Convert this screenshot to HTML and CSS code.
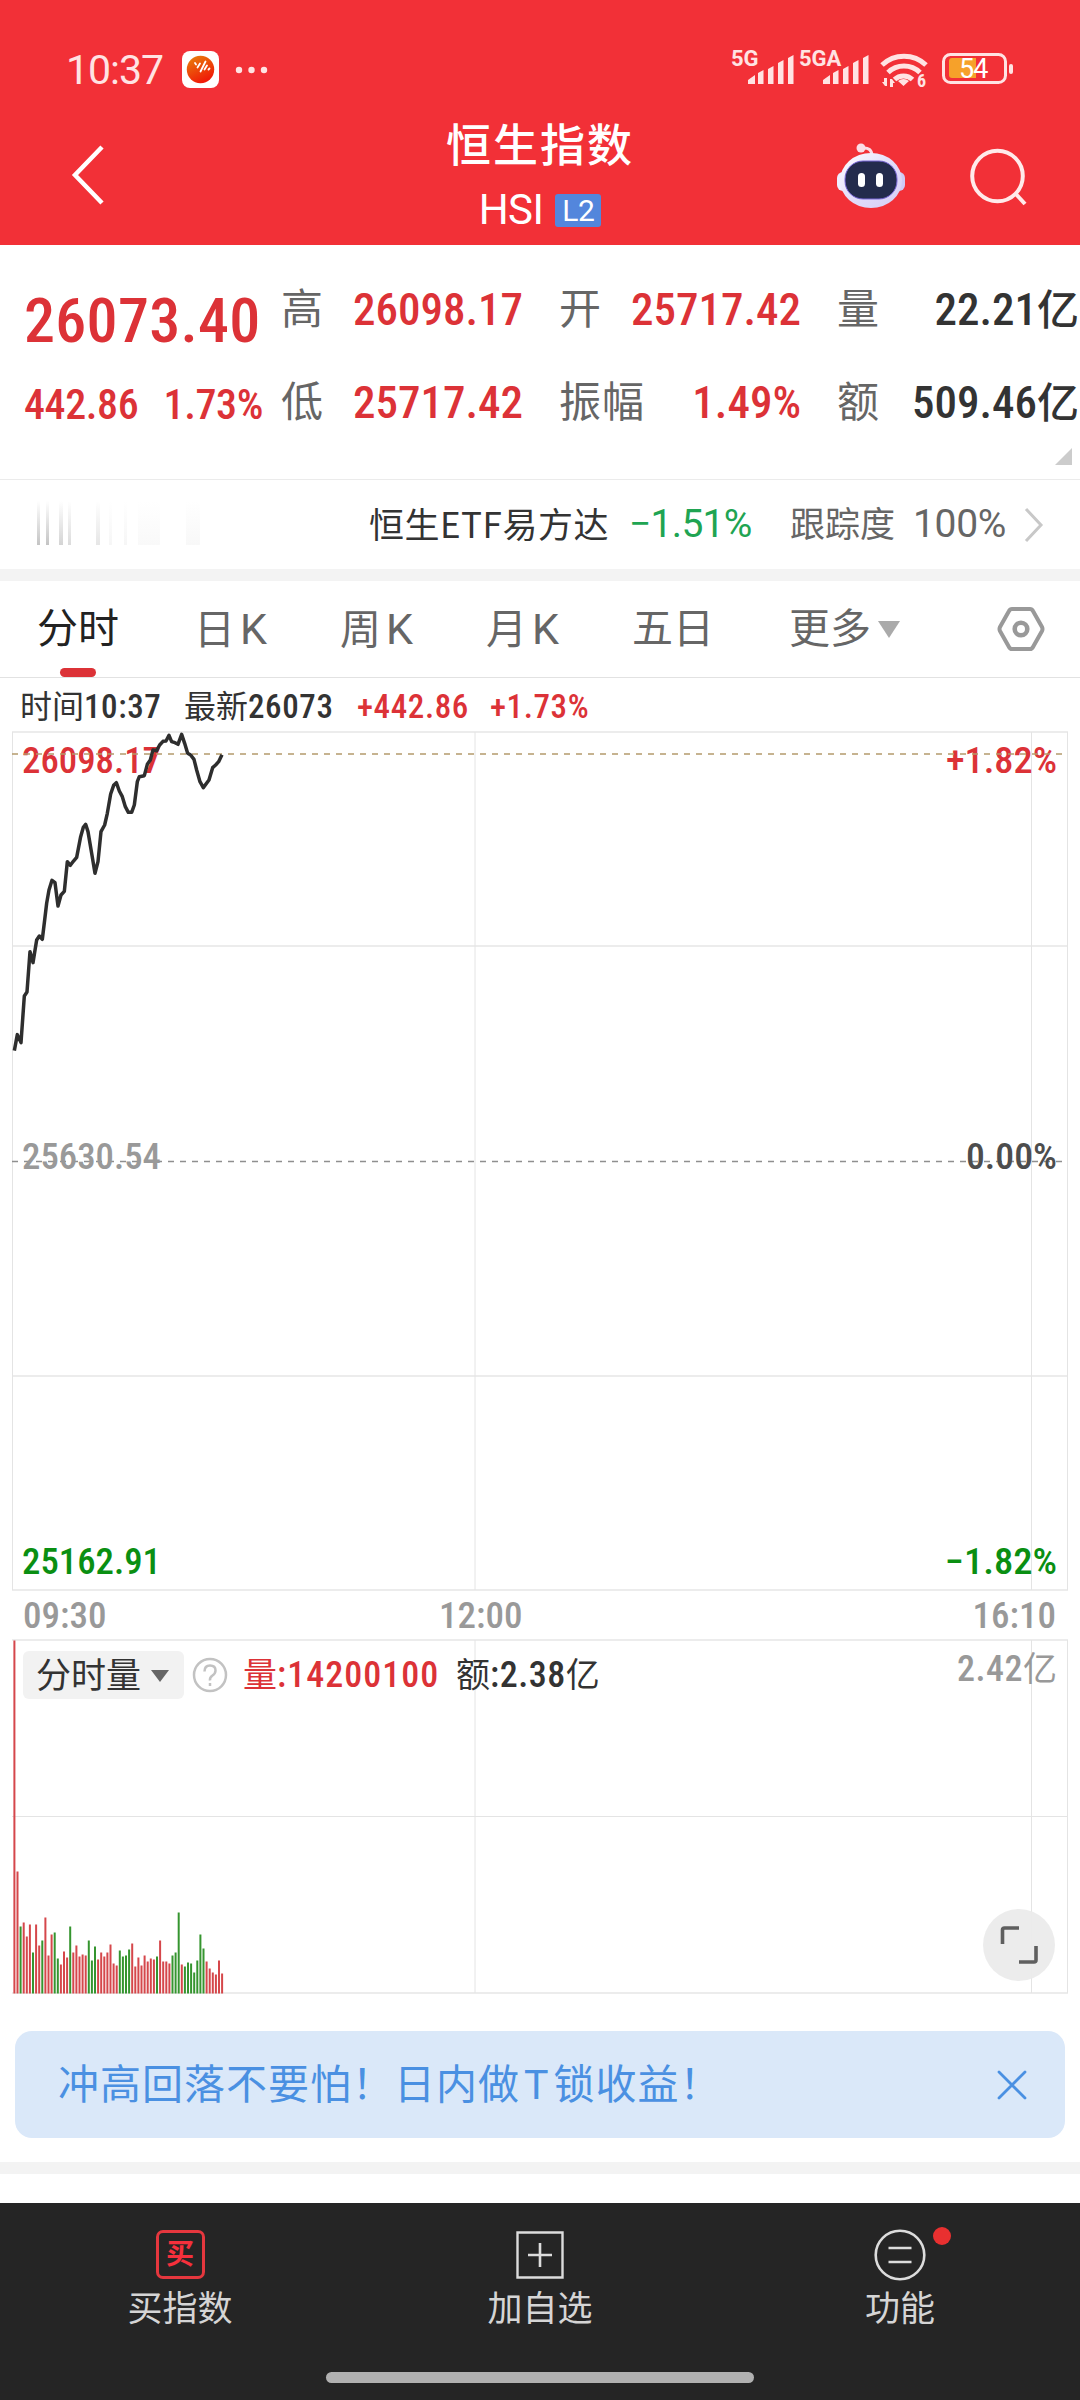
FILE: index.html
```html
<!DOCTYPE html>
<html lang="zh-CN">
<head>
    <meta charset="UTF-8">
    <meta name="viewport" content="width=device-width, initial-scale=1.0">
    <title>恒生指数 HSI</title>
    <link rel="stylesheet" href="styles.css">
</head>
<body>
    <header class="header">
        <div class="status-bar">
            <span class="clock">10:37</span>
            <svg class="app-icon" width="38" height="38" viewBox="0 0 38 38">
                <defs>
                    <linearGradient id="appFill" x1="0" y1="0" x2="0.5" y2="1">
                        <stop offset="0" stop-color="#e8850c"/>
                        <stop offset="1" stop-color="#f01a08"/>
                    </linearGradient>
                </defs>
                <rect width="37" height="37" rx="8" fill="#fff"/>
                <circle cx="18.5" cy="18.500" r="13.700" fill="url(#appFill)"/>
                <path d="M13 12l1 1.500M15.500 16.500l2.500-4M18.500 20.500l5-10M22.500 18.500l2.500-4M26.500 18.500l1-1" stroke="#fff" stroke-width="1.800" stroke-linecap="round"/>
            </svg>
            <svg class="dots" width="34" height="8" viewBox="0 0 34 8" fill="#ffe3e3">
                <circle cx="4" cy="4" r="3.200"/><circle cx="16.500" cy="4" r="3.200"/><circle cx="29" cy="4" r="3.200"/>
            </svg>
            <svg class="signals" width="284" height="56" viewBox="730 42 284 56" fill="#ffe3e3">
                <text class="net" x="731" y="66">5G</text>
                <path d="M748 84v-4l7-5v9zM758 84V73l5.500-3v14zM768 84V69l5.500-3v18zM778 84V63l5.500-3v24zM788 84V58l5.500-3v29z"/>
                <text class="net" x="799" y="66">5GA</text>
                <path d="M823 84v-4l7-5v9zM833 84V73l5.500-3v14zM843 84V69l5.500-3v18zM853 84V63l5.500-3v24zM863 84V58l5.500-3v29z"/>
                <g fill="none" stroke="#ffe3e3" stroke-width="5">
                    <path d="M882 65a32 32 0 0 1 44 0M888 72.500a23 23 0 0 1 32 0M894.500 79.500a13 13 0 0 1 18 0"/>
                </g>
                <path d="M898 81q5.500-4 11 0l-5.500 5zM887 78v8h-2l-3-4h2v-4zM890 87v-8h2l3 4h-2v4z"/>
                <text class="wifi-gen" x="917" y="87">6</text>
                <rect x="943.500" y="54.500" width="62" height="28" rx="7" fill="none" stroke="#ffe3e3" stroke-width="3"/>
                <path d="M949 61q0-3 3-3h24v20h-24q-3 0-3-3z" fill="#f6a12a"/>
                <rect x="1009" y="64" width="4" height="10" rx="2"/>
                <text class="battery" x="959" y="78">54</text>
            </svg>
        </div>
        <div class="title-bar">
            <svg class="back" width="40" height="62" viewBox="0 0 40 62">
                <path d="M34 3L7 31l27 28" fill="none" stroke="#fff" stroke-width="4.500"/>
            </svg>
            <div class="title">
                <h1>恒生指数</h1>
                <div class="code">HSI<span class="badge">L2</span></div>
            </div>
            <div class="actions">
                <svg class="robot" width="70" height="68" viewBox="0 0 70 68">
                    <defs>
                        <linearGradient id="shell" x1="0" y1="0" x2="1" y2="1">
                            <stop offset="0" stop-color="#fff"/>
                            <stop offset="0.500" stop-color="#e2ddfa"/>
                            <stop offset="1" stop-color="#d5cdf5"/>
                        </linearGradient>
                    </defs>
                    <path d="M26 7q10-1 10 8" fill="none" stroke="#fbdde6" stroke-width="3"/>
                    <circle cx="25" cy="7" r="4.500" fill="#fbdde6"/>
                    <rect x="1" y="31" width="12" height="19" rx="6" fill="#efedff"/>
                    <rect x="57" y="31" width="12" height="19" rx="6" fill="#cfcaf6"/>
                    <ellipse cx="35" cy="39.500" rx="31" ry="27.500" fill="url(#shell)"/>
                    <rect x="9" y="20" width="52" height="38" rx="18" fill="#232b4c" stroke="#7a68d8" stroke-width="1"/>
                    <rect x="22" y="32" width="7" height="14" rx="3.500" fill="#fff"/>
                    <rect x="40" y="32" width="7" height="14" rx="3.500" fill="#fff"/>
                </svg>
                <svg class="search" width="60" height="60" viewBox="0 0 60 60" fill="none" stroke="#ffeaea" stroke-width="4">
                    <circle cx="28.500" cy="29" r="25.300"/>
                    <path d="M46 46l10 11"/>
                </svg>
            </div>
        </div>
    </header>

    <section class="quote">
        <div class="quote-main">
            <div class="price">26073.40</div>
            <div class="change"><span>442.86</span><span>1.73%</span></div>
        </div>
        <dl class="quote-grid">
            <div><dt>高</dt><dd class="up">26098.17</dd></div>
            <div><dt>开</dt><dd class="up">25717.42</dd></div>
            <div><dt>量</dt><dd>22.21<i>亿</i></dd></div>
            <div><dt>低</dt><dd class="up">25717.42</dd></div>
            <div><dt>振幅</dt><dd class="up">1.49%</dd></div>
            <div><dt>额</dt><dd>509.46<i>亿</i></dd></div>
        </dl>
        <span class="corner"></span>
    </section>

    <section class="etf">
        <span class="ticker-fade"></span>
        <span class="etf-name">恒生ETF易方达</span>
        <span class="etf-change">−1.51%</span>
        <span class="etf-label">跟踪度</span>
        <span class="etf-track">100%</span>
        <svg width="20" height="36" viewBox="0 0 20 36"><path d="M2 2l15 16L2 34" fill="none" stroke="#c8c8c8" stroke-width="3"/></svg>
    </section>

    <nav class="tabs">
        <span class="tab active">分时</span>
        <span class="tab">日<b>K</b></span>
        <span class="tab">周<b>K</b></span>
        <span class="tab">月<b>K</b></span>
        <span class="tab">五日</span>
        <span class="tab more">更多<i class="caret"></i></span>
        <svg class="settings" width="48" height="46" viewBox="0 0 48 46" fill="none" stroke="#999">
            <path d="M15 3h18q2 0 3 2l9 16q1 2 0 4l-9 16q-1 2-3 2H15q-2 0-3-2L3 25q-1-2 0-4l9-16q1-2 3-2z" stroke-width="4"/>
            <circle cx="24" cy="23" r="6.300" stroke-width="4.600"/>
        </svg>
    </nav>

    <div class="info">
        <span class="info-time">时间<b>10:37</b></span>
        <span class="info-last">最新<b>26073</b></span>
        <b class="up info-diff">+442.86</b>
        <b class="up info-rate">+1.73%</b>
    </div>

    <svg class="chart" width="1080" height="860" viewBox="0 731 1080 860">
        <g class="grid">
            <path d="M12 732H1068M12 946H1068M12 1376H1068M12 1590H1068"/>
            <path d="M12.500 732V1590M475 732V1590M1031.500 732V1590M1067.500 732V1590" class="thin"/>
        </g>
        <path d="M12 1161.500H1068" class="dash-close"/>
        <text x="22" y="773" textLength="139" lengthAdjust="spacingAndGlyphs" class="up">26098.17</text>
        <text x="946" y="773" textLength="111" lengthAdjust="spacingAndGlyphs" class="up">+1.82%</text>
        <text x="22" y="1169" textLength="139" lengthAdjust="spacingAndGlyphs" class="flat">25630.54</text>
        <text x="966" y="1169" textLength="91" lengthAdjust="spacingAndGlyphs" class="zero">0.00%</text>
        <text x="22" y="1574" textLength="139" lengthAdjust="spacingAndGlyphs" class="down">25162.91</text>
        <text x="945" y="1574" textLength="112" lengthAdjust="spacingAndGlyphs" class="down">−1.82%</text>
        <path d="M12 754H1068" class="dash-last"/>
        <!-- minute line, plotted in thirds of a pixel -->
        <g transform="translate(0 720) scale(0.3333)">
            <polyline class="price-line" points="43,992 52,944 63,968 73,828 81,816 90,695 99,728 110,660 118,648 127,658 134,600 140,550 147,510 156,481 165,488 174,558 183,525 193,514 202,425 211,436 220,424 230,412 242,350 250,322 257,313 264,335 275,400 285,460 294,425 303,335 314,315 322,280 332,222 341,196 349,188 358,213 367,230 376,260 385,277 395,277 403,255 412,185 418,170 433,167 442,133 451,120 459,90 470,92 479,75 489,64 498,63 507,46 515,65 525,68 534,73 545,43 554,70 563,100 572,105 582,118 590,150 600,185 610,203 627,180 638,143 647,135 656,125 666,104"/>
        </g>
    </svg>

    <div class="time-axis">
        <span>09:30</span>
        <span>12:00</span>
        <span>16:10</span>
    </div>

    <section class="volume">
        <svg class="volume-chart" width="1080" height="356" viewBox="0 1639 1080 356">
            <g class="grid">
                <path d="M12 1640H1068M12 1993H1068"/>
                <path d="M12 1816.500H1068M475 1640V1993M1031.500 1640V1993M1067.500 1640V1993" class="thin"/>
            </g>
            <g id="bars"></g>
        </svg>
        <div class="volume-head">
            <span class="chip">分时量<i class="caret dark"></i></span>
            <svg class="help" width="36" height="38" viewBox="0 0 36 38">
                <circle cx="18" cy="19" r="16" fill="none" stroke="#c2c2c2" stroke-width="2.500"/>
                <path d="M12.500 15.500q0-6 5.500-6t5.500 5q0 3-3 5t-2.500 5M18 27v3" fill="none" stroke="#c2c2c2" stroke-width="2.500"/>
            </svg>
            <span class="vol up">量<b>:14200100</b></span>
            <span class="amt">额<b>:2.38</b>亿</span>
            <span class="vol-max"><b>2.42</b>亿</span>
        </div>
        <svg class="expand" width="72" height="72" viewBox="0 0 72 72">
            <circle cx="36" cy="36" r="36" fill="#ebebeb" fill-opacity="0.950"/>
            <path d="M19.500 35V21q0-2 2-2H36M36 53h15q2 0 2-2V37" fill="none" stroke="#5f5f5f" stroke-width="3.600"/>
        </svg>
    </section>

    <div class="banner">
        <span>冲高回落不要怕！日内做<b>T</b>锁收益！</span>
        <svg width="32" height="32" viewBox="0 0 32 32"><path d="M3 3l26 26M29 3L3 29" stroke="#4a90e2" stroke-width="2.800" stroke-linecap="round"/></svg>
    </div>
    <div class="divider"></div>

    <footer class="bottom-nav">
        <div class="nav-items">
            <div class="nav-item">
                <span class="buy-icon">买</span>
                <span>买指数</span>
            </div>
            <div class="nav-item">
                <svg width="52" height="52" viewBox="0 0 52 52" fill="none" stroke="#dcdcdc">
                    <path d="M3.500 3.500h45v45h-45z" stroke-width="2.400"/>
                    <path d="M26 14v24M14 26h24" stroke-width="2.600"/>
                </svg>
                <span>加自选</span>
            </div>
            <div class="nav-item">
                <svg width="52" height="52" viewBox="0 0 52 52" fill="none" stroke="#dcdcdc" stroke-width="2.600">
                    <circle cx="26" cy="26" r="24.300"/>
                    <path d="M14.500 19h23M14.500 33h23"/>
                </svg>
                <i class="dot"></i>
                <span>功能</span>
            </div>
        </div>
        <div class="home-bar"></div>
    </footer>

    <script>
        // [direction, height] per minute
        const volumes = 'r353 r122 g67 r71 r57 r69 g41 r69 r48 g53 r76 r38 r59 g61 g35 r29 r42 r36 g67 r41 r48 r37 r39 r38 g53 g33 g47 r34 r41 r37 r41 r49 r30 r28 g43 g37 g38 g44 r50 r27 r36 r28 r38 r32 r35 r34 g37 r53 r32 r32 r30 g38 g41 g81 r29 g27 g31 g30 g21 g33 g59 g45 r32 r25 r21 r19 r33 r20'.split(' ');
        const bars = document.getElementById('bars');

        volumes.forEach((item, i) => {
            const height = Number(item.slice(1));
            const rect = document.createElementNS('http://www.w3.org/2000/svg', 'rect');
            rect.setAttribute('x', 13.4 + i * 3.1);
            rect.setAttribute('y', 1993.5 - height);
            rect.setAttribute('width', 2);
            rect.setAttribute('height', height);
            rect.setAttribute('class', item[0] === 'r' ? 'bar-up' : 'bar-down');
            bars.appendChild(rect);
        });
    </script>
</body>
</html>
```
FILE: styles.css
```css
* {
    box-sizing: border-box;
}
body {
    width: 1080px;
    height: 2400px;
    margin: 0;
    overflow: hidden;
    background-color: #fff;
    color: #333;
    font-family: Roboto, "Noto Sans CJK SC", sans-serif;
    font-stretch: 87.5%;
    line-height: 1;
}
i {
    font-style: normal;
}
b {
    font-weight: 480;
}
svg {
    display: block;
    flex: none;
}
span {
    white-space: nowrap;
}
.up {
    color: #dc3237;
    fill: #dc3237;
}

/* header */
.header {
    height: 245px;
    background-color: #f23037;
    color: #fff;
}
.status-bar {
    display: flex;
    align-items: center;
    height: 108px;
    padding: 32px 66px 0 66px;
}
.clock {
    width: 116px;
    color: #ffe3e3;
    font-size: 41px;
    font-stretch: 100%;
    letter-spacing: -1px;
}
.dots {
    margin-left: 15px;
}
.signals {
    margin-left: auto;
}
.net {
    font-size: 22px;
    font-weight: 700;
    font-stretch: 100%;
}
.wifi-gen {
    font-size: 18px;
    font-weight: 700;
}
.battery {
    font-size: 27px;
    font-weight: 450;
    font-stretch: 100%;
    letter-spacing: -1px;
    fill: #fff;
}
.title-bar {
    display: grid;
    grid-template-columns: 1fr auto 1fr;
    align-items: center;
    height: 137px;
    padding: 0 51px 0 68px;
}
.back {
    margin-top: -3px;
}
.title {
    margin-left: -17px;
    text-align: center;
}
h1 {
    margin: 0;
    font-size: 45px;
    font-weight: 500;
    letter-spacing: 2px;
}
.code {
    display: flex;
    justify-content: center;
    align-items: center;
    margin-top: 20px;
    margin-bottom: -2px;
    font-size: 42px;
    font-stretch: 100%;
    letter-spacing: -0.6px;
}
.badge {
    width: 46px;
    height: 33px;
    margin-left: 12px;
    border-radius: 3px;
    background-color: #5386dc;
    font-size: 30px;
    line-height: 34px;
    text-align: center;
}
.actions {
    display: flex;
    justify-content: flex-end;
    align-items: center;
    gap: 63px;
}
.robot {
    margin-top: -4px;
}

/* quote */
.quote {
    display: flex;
    position: relative;
    height: 235px;
    border-bottom: 1px solid #ebebeb;
}
.quote-main {
    flex: none;
    width: 281px;
    padding: 45px 0 0 24px;
    color: #dc3237;
    font-weight: 500;
}
.price {
    font-size: 62px;
    letter-spacing: 0.3px;
}
.change {
    display: flex;
    justify-content: space-between;
    width: 239px;
    margin-top: 32px;
    font-size: 42px;
    font-weight: 480;
    letter-spacing: -0.4px;
}
.quote-grid {
    display: grid;
    grid-template-columns: repeat(3, 242px);
    grid-template-rows: 93px 93px;
    column-gap: 36px;
    margin: 18px 0 0;
}
.quote-grid div {
    display: flex;
    justify-content: space-between;
    align-items: center;
}
dt {
    color: #666;
    font-size: 42px;
    letter-spacing: 1px;
    white-space: nowrap;
}
dd {
    margin: 0;
    font-size: 45px;
    font-weight: 480;
    white-space: nowrap;
}
dd i {
    font-size: 42px;
}
.corner {
    position: absolute;
    right: 8px;
    bottom: 14px;
    border-left: 17px solid transparent;
    border-bottom: 17px solid #ccc;
}

/* etf row */
.etf {
    display: flex;
    align-items: center;
    height: 101px;
    padding-left: 36px;
    border-bottom: 12px solid #f3f3f3;
}
.ticker-fade {
    width: 180px;
    height: 44px;
    margin-top: -4px;
    background:
        linear-gradient(#fff0, #c4c4c4) 1px 0 / 3px 44px no-repeat,
        linear-gradient(#fff0, #c4c4c4) 10px 0 / 3px 44px no-repeat,
        linear-gradient(#fff0, #d4d4d4) 23px 0 / 4px 44px no-repeat,
        linear-gradient(#fff0, #dcdcdc) 32px 0 / 3px 44px no-repeat,
        linear-gradient(#fff0, #e6e6e6) 60px 0 / 4px 44px no-repeat,
        linear-gradient(#fff0, #f6f6f6) 73px 0 / 3px 44px no-repeat,
        linear-gradient(#fff0, #f6f6f6) 88px 0 / 3px 44px no-repeat,
        linear-gradient(#fff0, #f9f9f9) 102px 0 / 22px 44px no-repeat,
        linear-gradient(#fff0, #f8f8f8) 150px 0 / 14px 44px no-repeat;
}
.etf-name {
    width: 260px;
    margin-top: -4px;
    margin-left: 153px;
    font-family: "Noto Sans CJK SC", sans-serif;
    font-size: 35px;
    letter-spacing: 0.5px;
}
.etf-change {
    width: 161px;
    color: #20a452;
    font-size: 39px;
    font-stretch: 100%;
    letter-spacing: -0.7px;
}
.etf-label {
    width: 123px;
    margin-top: 2px;
    color: #666;
    font-size: 35px;
}
.etf-track {
    width: 111px;
    color: #666;
    font-size: 39px;
    font-stretch: 100%;
    letter-spacing: -0.3px;
}

/* tabs */
.tabs {
    display: flex;
    align-items: center;
    height: 97px;
    padding-left: 37px;
    border-bottom: 1px solid #e2e2e2;
    color: #666;
    font-size: 41px;
}
.tab {
    position: relative;
    width: 146px;
}
.tab b {
    margin-left: 5px;
    font-weight: 400;
    font-size: 43px;
    font-stretch: 100%;
}
.tab.active {
    width: 157px;
    color: #222;
}
.tab.active::after {
    content: "";
    position: absolute;
    left: 23px;
    bottom: -27px;
    width: 36px;
    height: 9px;
    border-radius: 5px;
    background-color: #dc3237;
}
.tab.more {
    display: flex;
    align-items: center;
    width: 208px;
    margin-left: 11px;
}
.caret {
    margin-left: 7px;
    border: 11px solid transparent;
    border-top: 17px solid #aaa;
    border-bottom: 0;
}
.caret.dark {
    margin-left: 10px;
    border-width: 12px 9px 0;
    border-top-color: #666;
}

/* latest tick */
.info {
    display: flex;
    align-items: center;
    height: 53px;
    padding: 3px 0 0 20px;
    font-size: 32px;
}
.info b {
    font-size: 33px;
    letter-spacing: 0.6px;
}
.info-time {
    width: 164px;
}
.info-last {
    width: 173px;
}
.info-diff {
    width: 133px;
}

/* chart */
.grid path {
    fill: none;
    stroke: #ececec;
    stroke-width: 2;
}
.grid .thin {
    stroke: #e4e4e4;
    stroke-width: 1;
}
.chart text {
    font-size: 36px;
    font-weight: 460;
}
.chart .flat {
    fill: #999;
}
.chart .zero {
    fill: #4d4d4d;
}
.chart .down {
    fill: #0a8f12;
}
.dash-last, .dash-close {
    stroke: #b49a6c;
    stroke-width: 1.5;
    stroke-dasharray: 6 6;
}
.dash-close {
    stroke: #8f8f8f;
}
.price-line {
    fill: none;
    stroke: #2e2e2e;
    stroke-width: 10.5;
    stroke-linejoin: round;
}
.time-axis {
    display: grid;
    grid-template-columns: 416px 1fr auto;
    align-items: center;
    height: 48px;
    padding: 0 24px 0 23px;
    color: #999;
    font-size: 37px;
    font-weight: 480;
}

/* volume */
.volume {
    position: relative;
    height: 356px;
}
.bar-up {
    fill: #d5474b;
}
.bar-down {
    fill: #35952f;
}
.volume-head {
    display: flex;
    position: absolute;
    top: 12px;
    left: 23px;
    right: 23px;
    align-items: center;
    height: 48px;
    font-size: 34px;
}
.volume-head b {
    font-size: 36px;
    letter-spacing: 0.5px;
}
.chip {
    display: flex;
    align-items: center;
    width: 161px;
    height: 48px;
    padding: 2px 0 0 13px;
    border-radius: 6px;
    background-color: #f2f2f2;
    font-size: 35px;
}
.help {
    margin-left: 8px;
}
.vol {
    width: 213px;
    margin-left: 15px;
}
.vol b {
    letter-spacing: 1px;
}
.vol-max {
    margin: -12px 0 0 auto;
    color: #999;
}
.expand {
    position: absolute;
    top: 270px;
    left: 983px;
}

/* banner */
.banner {
    display: flex;
    align-items: center;
    justify-content: space-between;
    height: 107px;
    margin: 36px 15px 24px;
    padding: 0 37px 0 43px;
    border-radius: 17px;
    background-color: #dae8f9;
    color: #4a90e2;
    font-size: 41px;
    letter-spacing: 1px;
}
.banner span {
    padding-top: 2px;
}
.banner b {
    margin: 0 4px;
    font-weight: 400;
    font-stretch: 100%;
}
.divider {
    height: 12px;
    background-color: #f3f3f3;
}

/* bottom navigation */
.bottom-nav {
    height: 197px;
    margin-top: 29px;
    padding-top: 26px;
    background-color: #252525;
    color: #d5d5d5;
}
.nav-items {
    display: grid;
    grid-template-columns: repeat(3, 1fr);
    height: 143px;
}
.nav-item {
    display: flex;
    flex-direction: column;
    position: relative;
    align-items: center;
    font-size: 35px;
}
.nav-item span:last-child {
    margin-top: 11px;
}
.buy-icon {
    width: 49px;
    height: 49px;
    margin: 1px 0 2px;
    border: 3px solid #e5373e;
    border-radius: 7px;
    color: #f5303c;
    font-size: 28px;
    font-weight: 700;
    line-height: 44px;
    text-align: center;
}
.dot {
    position: absolute;
    top: -2px;
    left: 213px;
    width: 18px;
    height: 18px;
    border-radius: 50%;
    background-color: #e93030;
}
.home-bar {
    width: 428px;
    height: 11px;
    margin: 0 auto;
    border-radius: 6px;
    background-color: #b1b1b1;
}
```
